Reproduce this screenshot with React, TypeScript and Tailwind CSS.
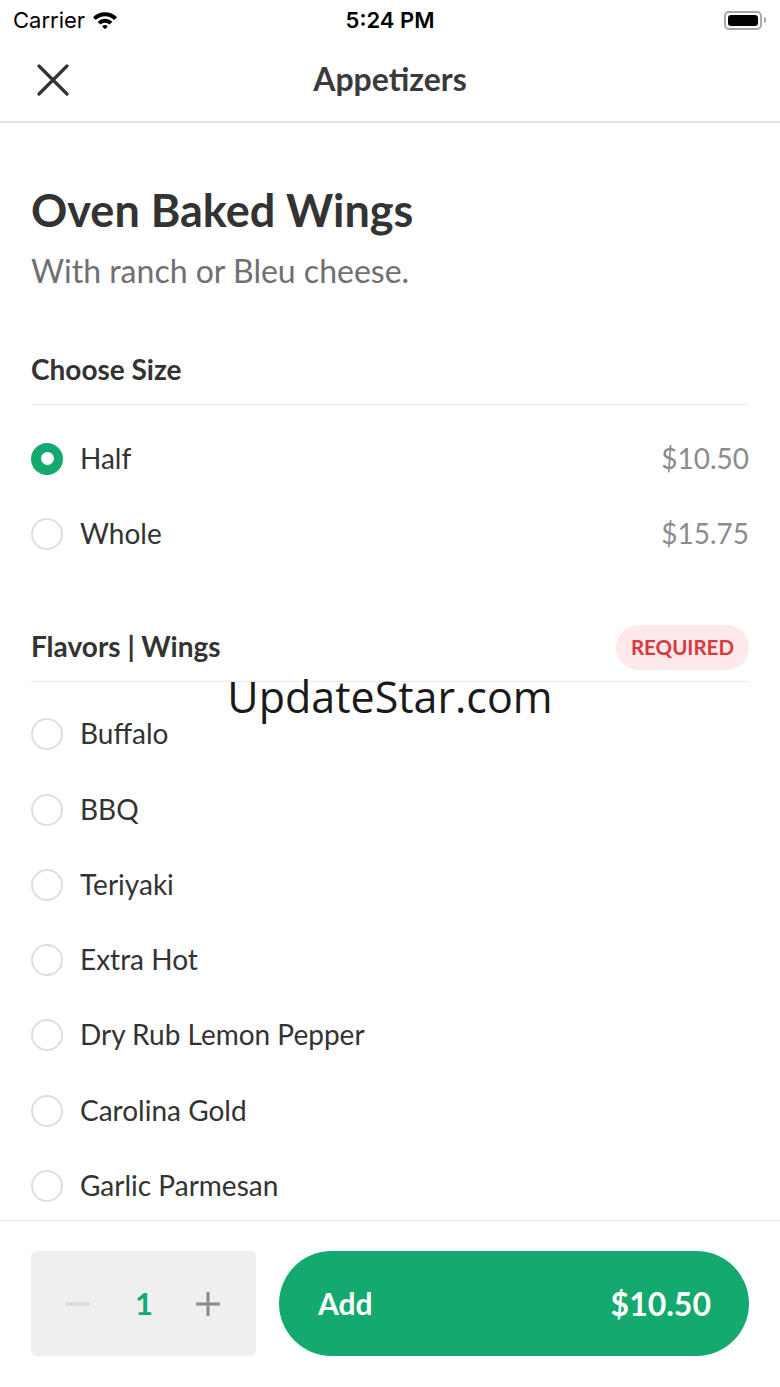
import React from "react";

const Radio = ({ checked }: { checked?: boolean }) =>
  checked ? (
    <div className="w-[32px] h-[32px] rounded-full bg-[#13a96f] flex items-center justify-center shrink-0">
      <div className="w-[13px] h-[13px] rounded-full bg-white" />
    </div>
  ) : (
    <div className="w-[32px] h-[32px] rounded-full border-[2px] border-[#dedede] shrink-0" />
  );

const Row = ({ label, price, checked }: { label: string; price?: string; checked?: boolean }) => (
  <div className="h-[75.3px] flex items-center">
    <Radio checked={checked} />
    <span className="ml-[17px] text-[28px] leading-[34px] -mt-[2px] text-[#333333]">{label}</span>
    {price && <span className="ml-auto text-[28px] leading-[34px] -mt-[2px] text-[#8c8c8c]">{price}</span>}
  </div>
);

export default function App() {
  const flavors = ["Buffalo", "BBQ", "Teriyaki", "Extra Hot", "Dry Rub Lemon Pepper", "Carolina Gold", "Garlic Parmesan"];
  return (
    <div className="relative w-[780px] h-[1387px] bg-white flex flex-col overflow-hidden" style={{ fontFamily: "Lato, 'Noto Sans', sans-serif" }}>
      {/* status bar */}
      <div className="h-[40px] shrink-0 flex items-center justify-between px-[13px] relative" style={{ fontFamily: "Inter, Roboto, sans-serif" }}>
        <div className="flex items-center gap-[7px]">
          <span className="text-[22px] text-black">Carrier</span>
          <svg width="26" height="20" viewBox="0 0 26 20">
            <path d="M1 7.2 A17 17 0 0 1 25 7.2 L22.2 10 A13 13 0 0 0 3.8 10 Z" fill="#000" />
            <path d="M5.6 11.8 A10.5 10.5 0 0 1 20.4 11.8 L17.6 14.6 A6.5 6.5 0 0 0 8.4 14.6 Z" fill="#000" />
            <path d="M10.2 16.4 A4 4 0 0 1 15.8 16.4 L13 19.2 Z" fill="#000" />
          </svg>
        </div>
        <span className="absolute left-1/2 -translate-x-1/2 text-[22px] font-semibold text-black">5:24 PM</span>
        <div className="flex items-center gap-[2px] mr-[1px]">
          <div className="w-[38px] h-[19px] rounded-[5px] border-[2px] border-[#a8a8a8] p-[2px]">
            <div className="w-full h-full rounded-[3px] bg-black" />
          </div>
          <div className="w-[2px] h-[6px] rounded-r-[2px] bg-[#a8a8a8]" />
        </div>
      </div>
      {/* nav */}
      <div className="h-[83px] shrink-0 flex items-center relative border-b-[2px] border-[#e3e3e3]">
        <svg className="absolute left-[37px] top-[24px]" width="32" height="32" viewBox="0 0 32 32">
          <path d="M2 2 L30 30 M30 2 L2 30" stroke="#333" strokeWidth="3.2" strokeLinecap="round" />
        </svg>
        <div className="w-full text-center text-[32px] font-bold text-[#3a3a3a] -mt-[4px]">Appetizers</div>
      </div>
      {/* content */}
      <div className="flex-1 overflow-hidden px-[31px]">
        <div className="pt-[59px]">
          <h1 className="text-[45px] leading-[56px] font-bold text-[#333333]">Oven Baked Wings</h1>
          <p className="mt-[13px] text-[32px] leading-[40px] text-[#707070]">With ranch or Bleu cheese.</p>
        </div>
        <div className="mt-[60px] pb-[17px] border-b border-[#ebebeb]">
          <div className="text-[28px] leading-[36px] font-bold text-[#333333]">Choose Size</div>
        </div>
        <div className="pt-[16px]">
          <Row label="Half" price="$10.50" checked />
          <Row label="Whole" price="$15.75" />
        </div>
        <div className="mt-[53px] pb-[11px] border-b border-[#ebebeb] flex items-center justify-between">
          <div className="text-[28px] leading-[34px] -mt-[2px] font-bold text-[#333333]">Flavors | Wings</div>
          <div className="h-[45px] px-[15px] rounded-full bg-[#fde9e9] flex items-center text-[20.5px] font-bold text-[#d63a3f]">REQUIRED</div>
        </div>
        <div className="pt-[15px]">
          {flavors.map((f) => (
            <Row key={f} label={f} />
          ))}
        </div>
      </div>
      {/* footer */}
      <div className="h-[167px] shrink-0 border-t border-[#ececec] bg-white px-[31px] pt-[30px] flex gap-[23px]">
        <div className="w-[225px] h-[105px] rounded-[6px] bg-[#efefef] flex items-center">
          <svg className="ml-[35px]" width="24" height="4" viewBox="0 0 24 4">
            <path d="M0 2 H24" stroke="#d8d8d8" strokeWidth="3" />
          </svg>
          <span className="ml-[40px] w-[28px] text-center text-[31px] font-bold text-[#13a96f]">1</span>
          <svg className="ml-[38px]" width="24" height="24" viewBox="0 0 24 24">
            <path d="M0 12 H24 M12 0 V24" stroke="#8a8a8a" strokeWidth="3" />
          </svg>
        </div>
        <div className="flex-1 h-[105px] rounded-full bg-[#13a96f] flex items-center justify-between pl-[39px] pr-[38px]">
          <span className="text-[30px] font-bold text-white">Add</span>
          <span className="text-[32px] font-bold text-white">$10.50</span>
        </div>
      </div>
      {/* watermark */}
      <div className="absolute left-0 right-0 top-[668px] text-center text-[43px] leading-[58px] text-[#1a1a1a] pointer-events-none" style={{ fontFamily: "'Open Sans', sans-serif" }}>
        UpdateStar.com
      </div>
    </div>
  );
}
